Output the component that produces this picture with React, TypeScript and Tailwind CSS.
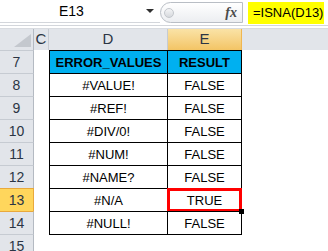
const font = { fontFamily: '"Liberation Sans", Arial, sans-serif' };

type Row = { n: number; d: string; e: string; head?: boolean; active?: boolean };

const rows: Row[] = [
  { n: 7, d: "ERROR_VALUES", e: "RESULT", head: true },
  { n: 8, d: "#VALUE!", e: "FALSE" },
  { n: 9, d: "#REF!", e: "FALSE" },
  { n: 10, d: "#DIV/0!", e: "FALSE" },
  { n: 11, d: "#NUM!", e: "FALSE" },
  { n: 12, d: "#NAME?", e: "FALSE" },
  { n: 13, d: "#N/A", e: "TRUE", active: true },
  { n: 14, d: "#NULL!", e: "FALSE" },
];

function RowHeader({ n, active, afterActive }: { n: number; active?: boolean; afterActive?: boolean }) {
  return (
    <div
      className={`flex w-[34px] shrink-0 items-center justify-center border-t border-r text-[14px] text-[#2b3544] ${
        active
          ? "bg-[#ffd65c] border-t-[#e9a93c] border-r-[#e9a93c]"
          : afterActive
          ? "bg-[#e2e5ea] border-t-[#e9a93c] border-r-[#b4bac2]"
          : "bg-[#e2e5ea] border-t-[#c6cbd2] border-r-[#b4bac2]"
      }`}
    >
      {n}
    </div>
  );
}

export default function App() {
  return (
    <div className="h-[251px] w-[328px] overflow-hidden bg-white text-black" style={font}>
      {/* formula bar */}
      <div className="flex h-[26px] border-b border-[#d3d6db]">
        <div className="flex h-[23px] w-[160px] shrink-0 items-center border-b border-[#d3d6db]">
          <span className="ml-[59px] text-[14px]">E13</span>
          <span className="ml-auto mr-[6px] h-0 w-0 border-x-[4px] border-t-[4px] border-x-transparent border-t-[#2f2f2f]" />
        </div>
        <div className="mt-[2px] flex h-[21px] w-[83px] shrink-0 items-center rounded-l-full border border-[#b9bec5] bg-gradient-to-b from-white to-[#eceef1]">
          <span className="ml-[3px] h-[10px] w-[10px] rounded-full border border-[#c3c7cc] bg-gradient-to-b from-[#f4f5f6] to-[#d6d9dd]" />
          <span
            className="ml-auto mr-[5px] text-[14px] font-bold italic text-[#4a4a4a]"
            style={{ fontFamily: '"Liberation Serif", serif' }}
          >
            fx
          </span>
        </div>
        <div className="ml-[5px] mt-[2px] flex h-[22px] w-[76px] items-center bg-[#ffff00] pl-[5px] text-[13px]">
          =ISNA(D13)
        </div>
      </div>

      {/* column headers */}
      <div className="mt-[2px] flex h-[22px] border-t border-[#d8dbe0] bg-[#e2e5ea] text-[15px] text-[#2b3544]">
        <div className="flex w-[34px] shrink-0 items-end justify-end border-r border-[#b4bac2] pb-[3px] pr-[2px]">
          <svg width="17" height="13" viewBox="0 0 17 13">
            <polygon points="17,0 17,13 0,13" fill="#c4c8ce" />
          </svg>
        </div>
        <div className="flex w-[15px] shrink-0 items-center justify-center border-r border-[#c6cbd2]">C</div>
        <div className="flex w-[119px] shrink-0 items-center justify-center border-r border-[#c6cbd2]">D</div>
        <div className="flex w-[74px] shrink-0 items-center justify-center border-r border-[#f0b650] bg-gradient-to-b from-[#fae3a6] to-[#f3c464]">
          E
        </div>
        <div className="flex-1" />
      </div>

      {/* sheet rows */}
      {rows.map((r, i) => (
        <div key={r.n} className="flex h-[23px]">
          <RowHeader n={r.n} active={r.active} afterActive={rows[i - 1]?.active} />
          <div className="w-[15px] shrink-0" />
          <div
            className={`flex w-[118px] shrink-0 items-center justify-center border-t border-l border-black pt-px text-[13px] ${
              r.head ? "bg-[#00b0f0] font-bold" : ""
            }`}
          >
            {r.d}
          </div>
          <div
            className={`relative flex w-[75px] shrink-0 items-center justify-center border-t border-x border-black pt-px text-[13px] ${
              r.head ? "bg-[#00b0f0] font-bold" : ""
            }`}
          >
            {r.e}
            {r.active && (
              <>
                <div className="absolute -inset-px border-[3px] border-[#ff0000]" />
                <div className="absolute -bottom-[3px] -right-[3px] h-[5px] w-[5px] bg-black" />
              </>
            )}
          </div>
        </div>
      ))}
      <div className="flex h-[23px]">
        <RowHeader n={15} />
        <div className="w-[15px] shrink-0" />
        <div className="w-[193px] shrink-0 border-t border-black" />
      </div>
    </div>
  );
}
